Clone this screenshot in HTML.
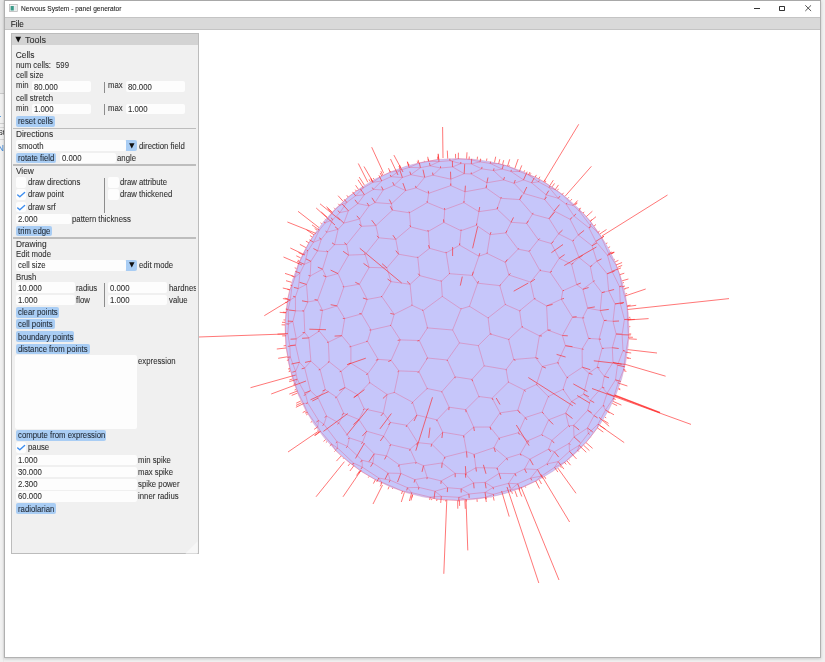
<!DOCTYPE html>
<html><head><meta charset="utf-8">
<style>
html,body{margin:0;padding:0;}
body{width:825px;height:662px;overflow:hidden;position:relative;background:#ebebeb;font-family:"Liberation Sans",sans-serif;}
.t{position:absolute;white-space:nowrap;line-height:1;-webkit-text-stroke:0.08px currentColor;}
.r{position:absolute;}
#win{position:absolute;left:4px;top:0;width:817px;height:658px;background:#fff;box-shadow:0 0 0 0 #999, 1px 1px 3px rgba(0,0,0,0.25);}
</style></head><body>
<div id="root" style="position:absolute;left:0;top:0;width:825px;height:662px;will-change:transform">
<div class="r" style="left:0;top:0;width:825px;height:662px;background:#f1f1f1"></div>
<div class="r" style="left:0;top:0;width:4px;height:93px;background:#e6e6e6"></div>
<div class="r" style="left:0;top:93px;width:4px;height:0.8px;background:#c9c9c9"></div>
<div class="r" style="left:0;top:115.7px;width:1.3px;height:1px;background:#5a9fe0"></div>
<div class="r" style="left:0;top:123.2px;width:4px;height:0.8px;background:#cfcfcf"></div>
<div class="r" style="left:0;top:127px;width:4px;height:0.8px;background:#d6d6d6"></div>
<div class="t" style="left:-2.6px;top:129.2px;font-size:8px;color:#333;width:6.4px;overflow:hidden">St</div>
<div class="r" style="left:0;top:139.4px;width:4px;height:0.8px;background:#d6d6d6"></div>
<div class="t" style="left:-2.2px;top:144.4px;font-size:8.5px;color:#4a8ed8;width:6px;overflow:hidden">N</div>
<div class="r" style="left:2.6px;top:0;width:1.4px;height:662px;background:linear-gradient(90deg,rgba(0,0,0,0),rgba(0,0,0,0.06))"></div>
<div class="r" style="left:4px;top:0;width:817px;height:658px;background:#fff;box-shadow:0 1px 3px rgba(0,0,0,0.18)"></div>
<div class="r" style="left:3.5px;top:0;width:1.2px;height:658px;background:#b0b0b0"></div>
<div class="r" style="left:820.3px;top:0;width:1.2px;height:658px;background:#b0b0b0"></div>
<div class="r" style="left:4px;top:657px;width:817px;height:1.3px;background:#b2b2b2"></div>
<div class="r" style="left:4px;top:0;width:817px;height:1px;background:#a8a8a8"></div>
<!-- title -->
<svg class="r" style="left:9px;top:4px" width="9" height="8" viewBox="0 0 9 8"><rect x="0.5" y="0.5" width="7.8" height="7" fill="#f4f4f4" stroke="#b9b9b9" stroke-width="0.8"/><rect x="1.6" y="2" width="3.2" height="4.5" fill="#3a9a88"/><rect x="5.4" y="2" width="2" height="4.5" fill="#dfe8ea"/></svg>
<div class="t" style="left:20.5px;top:5.2px;font-size:7.8px;color:#1e1e1e;transform-origin:0 0;transform:scaleX(0.845);-webkit-text-stroke:0.1px #1e1e1e">Nervous System - panel generator</div>
<div class="r" style="left:754.2px;top:8.2px;width:6.2px;height:0.9px;background:#333"></div>
<div class="r" style="left:779.1px;top:5.5px;width:4.2px;height:3.9px;border:0.85px solid #333;border-radius:0.8px"></div>
<svg class="r" style="left:804.8px;top:5.2px" width="7" height="7" viewBox="0 0 7 7"><path d="M0.3 0.3L6.1 6.0M6.1 0.3L0.3 6.0" stroke="#333" stroke-width="0.85"/></svg>
<!-- menu -->
<div class="r" style="left:5px;top:17px;width:815px;height:12.5px;background:#d9d9d9;border-top:1px solid #c4c4c4;box-sizing:border-box"></div>
<div class="r" style="left:5px;top:29.3px;width:815px;height:0.9px;background:#c4c4c4"></div>
<div class="t" style="left:10.7px;top:21.2px;font-size:8.2px;color:#222">File</div>
<!-- sphere -->
<svg class="r" style="left:0;top:0" width="825" height="662" viewBox="0 0 825 662">
<ellipse cx="457.1" cy="329.4" rx="171.9" ry="170.9" fill="#c6c6fa" stroke="#d886b0" stroke-opacity="0.45" stroke-width="0.8"/>
<path d="M583.6 394.1L588.9 373.2M612.3 347.7L602.1 348.3M326.9 232.2L321.3 239.2M579.1 445.4L588.3 433.4M353.5 463.0L362.3 467.1M629.0 338.8L628.5 337.1M407.5 487.7L411.7 492.7M519.7 199.6L500.8 198.3M350.9 363.2L350.9 346.6M551.9 440.4L541.8 434.7M480.1 161.9L471.3 163.9M530.5 282.1L534.2 298.8M536.4 384.5L524.3 390.1M572.7 240.9L558.6 233.8M357.8 203.6L364.4 194.7M524.3 390.1L508.4 382.1M304.8 332.6L308.9 337.9M288.2 309.4L290.3 299.9M474.1 454.4L494.0 447.6M500.8 198.3L497.1 209.0M295.6 345.1L289.8 346.2M569.5 451.3L558.2 461.6M458.8 497.3L466.2 499.5M349.4 437.9L362.6 442.3M558.2 461.6L547.0 463.9M410.6 226.9L409.5 212.8M505.8 232.9L490.1 234.6M367.5 341.3L378.2 359.4M499.8 285.6L505.2 304.5M360.5 470.9L375.4 479.7M331.7 444.1L320.6 431.4M616.1 334.0L612.3 347.7M324.0 424.4L337.1 441.7M490.0 427.0L499.0 438.1M287.8 333.5L288.6 324.0M307.9 301.9L303.9 311.0M417.6 442.6L431.7 444.1M418.9 487.4L414.9 479.6M319.3 431.9L320.6 431.4M399.2 464.8L400.8 473.4M437.0 419.9L449.1 407.2M400.8 473.4L388.1 473.1M429.5 248.3L428.3 231.4M428.7 193.3L450.8 185.6M568.7 425.8L565.7 413.2M548.6 449.1L551.9 440.4M557.5 362.7L542.3 366.5M441.9 391.6L455.0 376.8M508.4 382.1L506.1 369.5M449.5 273.7L472.3 275.4M362.3 467.1L362.0 460.2M369.1 205.9L375.0 202.6M325.2 222.9L332.5 212.4M523.7 193.4L514.1 183.3M423.1 310.5L442.3 296.4M465.8 409.6L449.1 407.2M287.8 333.5L289.8 346.2M430.0 165.8L420.4 167.7M317.6 250.8L321.3 239.2M347.4 446.4L349.4 437.9M569.1 443.4L554.4 451.8M622.1 334.7L616.1 334.0M597.4 427.9L598.0 424.2M548.7 419.8L541.8 434.7M367.8 373.8L350.9 363.2M388.1 473.1L372.9 463.0M559.2 258.3L571.6 264.2M519.6 310.8L534.2 298.8M416.1 187.9L405.7 190.6M590.3 266.5L593.3 281.4M531.6 182.8L523.5 179.9M599.0 339.1L602.1 348.3M416.1 462.4L423.5 465.7M337.1 441.7L337.6 448.0M410.1 449.2L417.6 442.6M290.0 368.6L295.2 383.8M578.3 235.0L570.1 219.3M529.2 251.3L518.1 249.2M590.4 221.2L583.1 213.0M295.4 296.8L290.3 299.9M558.3 198.3L566.1 204.1M485.5 497.4L493.4 494.3M460.8 163.6L471.3 163.9M535.7 357.7L539.4 335.8M583.6 394.1L590.3 400.4M475.9 467.7L474.1 454.4M363.4 187.9L372.7 182.4M465.4 473.8L455.2 473.4M322.5 269.2L326.1 276.8M474.1 454.4L466.5 451.6M289.7 289.9L287.8 298.7M442.7 432.2L463.7 435.7M508.6 483.3L493.1 487.4M530.7 478.1L537.5 469.5M608.7 253.6L616.0 265.0M407.5 487.7L390.1 480.2M519.7 199.6L523.7 193.4M348.6 255.1L338.0 273.6M314.0 234.8L308.8 242.8M288.6 360.0L290.0 368.6M430.0 165.8L440.6 168.0M624.1 370.8L623.6 369.5M480.1 161.9L490.2 163.4M366.7 431.2L362.6 442.3M484.2 365.8L472.0 379.4M531.6 182.8L546.1 194.8M386.5 455.8L374.2 453.8M534.2 298.8L546.6 305.9M400.4 170.2L390.4 172.2M353.8 465.8L360.5 470.9M324.0 424.4L318.6 420.5M416.1 462.4L399.2 464.8M359.6 219.0L361.4 226.3M566.9 377.4L582.3 367.2M458.3 158.9L449.9 160.7M562.2 194.5L573.1 205.4M588.3 433.4L587.5 428.0M292.9 321.4L295.5 310.8M417.8 257.6L419.7 275.6M402.5 491.1L381.7 482.1M295.5 310.8L295.4 296.8M327.9 251.8L322.5 269.2M569.5 451.3L569.1 443.4M527.8 440.8L518.4 432.7M613.2 398.4L613.2 401.4M326.6 416.1L324.0 424.4M519.7 199.6L532.4 214.2M513.7 359.5L506.1 369.5M536.4 384.5L542.3 366.5M412.2 305.3L410.1 284.3M332.5 212.4L339.8 205.4M555.2 189.7L544.0 181.7M447.3 360.0L455.0 376.8M478.3 345.6L484.2 365.8M414.9 479.6L400.8 473.4M296.3 338.9L292.9 321.4M341.8 335.7L344.7 318.5M348.2 197.0L356.3 191.0M290.3 356.9L289.8 346.2M500.0 412.9L517.8 410.2M570.1 219.3L573.9 215.9M443.9 222.4L444.7 209.7M317.8 426.8L320.6 431.4M375.4 479.7L381.7 482.1M463.9 202.6L465.0 191.8M473.7 427.1L463.7 435.7M555.2 189.7L562.2 194.5M390.4 422.4L383.3 413.1M572.7 240.9L578.3 235.0M513.7 359.5L535.7 357.7M558.6 233.8L549.1 218.7M594.0 415.6L603.1 405.5M410.8 174.7L424.7 177.3M410.1 449.2L416.1 462.4M341.2 455.9L335.6 450.4M331.7 444.1L337.6 448.0M295.6 371.3L290.3 356.9M613.0 321.3L604.1 320.5M337.1 441.7L347.4 446.4M412.6 402.3L427.2 388.5M429.5 248.3L417.8 257.6M303.6 403.6L307.7 402.9M604.3 376.3L613.0 362.4M288.6 324.0L288.2 309.4M299.5 362.3L304.7 368.0M554.2 211.0L570.1 219.3M547.8 330.1L562.4 335.5M392.4 210.2L391.5 203.8M607.1 273.8L608.7 290.9M579.1 257.6L572.7 240.9M538.4 239.8L526.7 223.4M517.8 410.2L525.2 417.6M313.5 242.2L308.0 250.7M306.5 284.4L298.3 288.5M455.2 473.4L441.2 480.9M375.9 225.6L392.4 210.2M308.9 337.9L319.3 331.1M295.6 345.1L296.3 338.9M387.2 394.5L369.8 382.6M341.2 371.3L329.2 361.8M468.9 494.0L458.8 497.3M322.5 310.4L317.6 300.2M357.8 203.6L369.1 205.9M369.2 267.4L365.2 254.5M532.4 214.2L526.7 223.4M598.0 424.2L588.3 433.4M322.5 269.2L310.2 276.0M409.5 212.8L427.3 202.5M518.1 249.2L505.8 232.9M529.2 251.3L538.4 239.8M417.6 442.6L406.9 425.3M307.5 412.4L317.8 426.8M406.9 425.3L416.9 415.0M417.8 257.6L398.6 254.2M288.6 360.0L290.3 356.9M497.0 468.0L499.1 473.4M390.6 444.6L383.7 436.1M398.6 254.2L395.8 239.4M466.5 451.6L463.7 435.7M308.8 242.8L303.1 254.8M419.3 340.5L400.3 339.9M485.1 482.4L493.1 487.4M508.9 275.0L530.5 282.1M428.7 193.3L427.3 202.5M551.3 243.5L558.6 233.8M550.2 272.3L559.2 258.3M373.4 189.4L381.7 180.9M424.7 177.3L416.1 187.9M410.8 174.7L402.4 177.5M443.9 222.4L428.3 231.4M292.9 321.4L288.6 324.0M383.3 413.1L364.2 408.9M441.2 480.9L427.2 477.5M295.6 371.3L299.5 362.3M601.9 292.6L600.2 310.5M427.2 477.5L423.5 465.7M319.3 331.1L328.4 342.2M299.5 362.3L295.6 345.1M615.5 379.8L617.5 365.2M461.0 230.7L459.6 245.1M317.6 300.2L326.1 276.8M503.6 179.9L493.5 170.6M369.2 267.4L386.9 267.9M622.1 286.8L619.5 286.6M449.5 273.7L446.2 252.9M364.4 194.7L373.4 189.4M518.4 432.7L525.2 417.6M478.3 345.6L490.1 333.9M427.5 327.9L452.6 330.0M465.4 473.8L475.9 467.7M569.1 443.4L574.0 436.9M623.0 350.6L617.5 365.2M292.1 285.6L290.3 299.9M378.8 478.0L362.3 467.1M507.6 166.1L519.5 171.5M298.8 263.7L303.1 254.8M468.9 494.0L485.0 492.4M394.3 392.4L398.9 370.9M427.6 358.0L418.9 371.6M492.1 398.2L500.0 412.9M601.5 237.8L608.7 253.6M620.3 303.6L615.0 303.9M419.7 275.6L441.3 281.3M440.6 168.0L433.0 175.2M390.9 325.4L371.0 330.0M571.6 264.2L576.7 284.6M326.9 232.2L332.8 219.5M521.9 326.9L519.6 310.8M460.8 163.6L452.5 166.9M303.6 403.6L307.5 412.4M430.2 497.1L436.9 499.3M561.3 299.2L572.5 317.2M628.5 337.1L627.5 319.8M519.1 488.5L535.7 481.0M465.8 409.6L473.7 427.1M622.1 334.7L623.0 350.6M442.2 462.9L444.8 457.1M517.7 483.8L510.3 489.8M285.2 322.4L286.1 312.5M304.8 332.6L296.3 338.9M605.5 410.1L613.2 398.4M371.0 330.0L367.5 341.3M523.7 193.4L544.7 199.5M308.9 337.9L310.9 361.1M493.5 170.6L502.2 169.1M391.1 360.3L400.3 339.9M601.5 237.8L597.8 232.5M519.5 171.5L510.9 171.4M469.5 306.3L488.1 317.9M593.3 281.4L601.9 292.6M508.9 275.0L505.3 262.3M433.0 175.2L450.8 179.2M383.2 190.0L373.4 189.4M612.3 347.7L613.0 362.4M338.9 423.0L349.4 437.9M419.3 340.5L427.6 358.0M620.3 303.6L624.4 319.5M329.2 361.8L328.4 342.2M409.1 167.4L420.4 167.7M588.9 373.2L597.2 367.2M542.1 412.1L525.2 417.6M387.2 394.5L394.3 392.4M355.6 195.8L346.8 202.4M551.3 243.5L538.4 239.8M338.0 273.6L343.9 286.9M554.2 211.0L549.1 218.7M359.6 219.0L343.9 223.1M319.3 230.1L325.2 222.9M341.8 335.7L328.4 342.2M493.4 494.3L485.0 492.4M289.7 289.9L292.1 285.6M338.0 273.6L326.1 276.8M515.1 473.6L524.6 468.9M546.6 305.9L547.8 330.1M447.3 360.0L427.6 358.0M297.2 379.2L305.6 394.6M526.7 223.4L511.1 222.3M305.6 394.6L307.7 402.9M394.2 314.3L412.2 305.3M573.1 205.4L566.1 204.1M399.2 464.8L386.5 455.8M566.1 204.1L573.9 215.9M506.7 458.2L520.3 453.9M460.8 163.6L449.9 160.7M519.1 488.5L510.3 489.8M497.1 209.0L478.9 211.7M582.3 367.2L582.1 349.0M348.6 255.1L346.7 244.5M307.9 301.9L306.5 284.4M582.1 349.0L588.6 338.4M440.6 168.0L452.5 166.9M472.0 379.4L455.0 376.8M427.5 327.9L419.3 340.5M549.1 218.7L532.4 214.2M539.9 270.5L530.5 282.1M295.2 383.8L297.4 391.0M624.4 319.5L627.5 319.8M518.4 432.7L499.0 438.1M590.3 266.5L596.9 261.2M395.8 239.4L410.6 226.9M616.1 334.0L613.0 321.3M557.5 362.7L565.4 345.7M386.5 455.8L390.6 444.6M298.3 288.5L295.4 296.8M358.9 419.5L364.2 408.9M510.9 171.4L502.2 169.1M488.1 317.9L505.2 304.5M518.1 249.2L505.3 262.3M490.2 163.4L502.2 169.1M473.6 482.9L485.1 482.4M441.3 281.3L449.5 273.7M477.6 283.2L472.3 275.4M418.9 487.4L435.0 491.2M345.0 387.5L336.5 397.2M361.5 313.9L367.2 299.4M478.9 256.2L487.0 253.4M593.3 281.4L582.9 289.3M367.2 299.4L359.4 284.2M329.2 361.8L320.1 369.5M390.4 172.2L381.7 176.1M514.1 183.3L523.5 179.9M391.1 281.6L410.1 284.3M477.6 283.2L499.8 285.6M554.2 211.0L544.7 199.5M538.5 181.8L528.6 175.0M343.9 223.1L338.1 229.3M623.6 369.5L618.2 383.0M441.9 391.6L449.1 407.2M599.0 339.1L604.1 320.5M627.2 306.5L627.5 319.8M343.7 413.3L336.5 397.2M411.7 492.7L402.5 491.1M548.3 396.5L563.0 389.3M542.1 412.1L548.7 419.8M355.6 195.8L364.4 194.7M367.5 341.3L350.9 346.6M308.0 250.7L303.1 254.8M478.9 211.7L476.4 225.3M511.1 222.3L497.1 209.0M410.1 284.3L419.7 275.6M361.5 313.9L344.7 318.5M405.7 190.6L394.1 185.3M486.1 187.9L486.9 182.8M528.6 175.0L535.3 177.0M428.7 193.3L416.1 187.9M481.7 168.8L493.5 170.6M348.4 210.8L339.9 212.6M381.7 180.9L391.0 176.7M310.9 361.1L320.1 369.5M528.6 175.0L519.5 171.5M416.9 415.0L412.6 402.3M461.0 230.7L476.4 225.3M562.4 335.5L572.5 317.2M346.8 202.4L339.9 212.6M427.2 388.5L418.9 371.6M558.3 198.3L546.1 194.8M523.5 179.9L510.9 171.4M596.9 261.2L592.0 245.8M375.0 202.6L391.5 203.8M338.1 229.3L334.6 244.6M444.7 209.7L427.3 202.5M443.9 222.4L461.0 230.7M395.8 239.4L378.7 237.8M369.8 382.6L357.8 394.8M410.1 449.2L390.6 444.6M590.0 225.2L578.8 210.4M435.0 491.2L447.6 487.7M465.4 473.8L473.6 482.9M446.2 252.9L459.6 245.1M461.1 488.8L447.6 487.7M325.3 389.7L318.2 398.1M469.1 159.3L480.1 161.9M286.1 312.5L288.2 309.4M544.0 181.7L535.3 177.0M513.7 359.5L508.6 339.4M400.4 170.2L391.0 176.7M565.4 345.7L562.4 335.5M524.6 468.9L529.9 459.2M542.3 366.5L535.7 357.7M503.6 179.9L486.9 182.8M318.6 420.5L307.7 402.9M557.5 362.7L566.9 377.4M346.8 202.4L339.8 205.4M459.4 342.9L447.3 360.0M326.9 232.2L338.1 229.3M409.1 167.4L418.9 163.2M305.6 394.6L310.4 390.7M473.6 482.9L461.1 488.8M308.0 250.7L304.3 264.3M430.2 497.1L441.3 496.3M457.7 500.5L436.9 499.3M366.7 431.2L383.7 436.1M535.7 481.0L541.4 476.1M514.1 183.3L503.6 179.9M589.0 228.0L590.0 225.2M287.8 333.5L285.6 335.8M565.4 345.7L582.1 349.0M353.8 465.8L353.5 463.0M378.2 359.4L391.1 360.3M579.1 257.6L571.6 264.2M595.8 241.4L607.5 255.3M579.1 257.6L590.3 266.5M500.8 198.3L486.1 187.9M537.5 469.5L524.6 468.9M472.3 275.4L478.9 256.2M547.0 463.9L554.4 451.8M455.2 473.4L442.2 462.9M369.8 382.6L367.8 373.8M586.0 442.6L597.4 427.9M530.7 478.1L517.7 483.8M511.1 222.3L505.8 232.9M412.6 402.3L394.3 392.4M520.3 453.9L527.8 440.8M469.5 306.3L477.6 283.2M554.4 451.8L548.6 449.1M348.4 210.8L357.8 203.6M471.3 163.9L481.7 168.8M588.9 373.2L582.3 367.2M478.9 256.2L459.6 245.1M539.4 335.8L521.9 326.9M464.2 173.7L450.8 179.2M338.9 423.0L343.7 413.3M505.3 262.3L487.0 253.4M548.3 396.5L542.1 412.1M423.5 465.7L442.2 462.9M357.8 394.8L345.0 387.5M386.9 267.9L391.1 281.6M627.5 305.6L627.2 306.5M332.8 219.5L339.9 212.6M472.0 379.4L478.9 396.5M578.3 235.0L592.0 245.8M317.6 250.8L310.9 261.3M500.0 412.9L490.0 427.0M625.8 352.2L623.0 350.6M452.5 166.9L464.2 173.7M394.1 185.3L383.2 190.0M530.7 478.1L541.4 476.1M568.7 425.8L573.6 425.4M587.6 308.1L600.2 310.5M573.6 425.4L587.7 410.3M490.2 163.4L498.7 163.7M471.2 174.0L464.2 173.7M612.0 271.3L619.5 286.6M369.2 267.4L359.4 284.2M587.5 428.0L574.0 436.9M524.3 390.1L517.8 410.2M444.8 457.1L466.5 451.6M549.1 187.5L555.2 189.7M414.9 479.6L427.2 477.5M499.1 473.4L485.1 482.4M619.7 274.7L622.1 286.8M597.2 367.2L602.1 348.3M431.7 444.1L444.8 457.1M358.9 419.5L343.7 413.3M338.9 423.0L326.6 416.1M476.4 225.3L490.1 234.6M497.0 468.0L506.7 458.2M423.1 310.5L412.2 305.3M390.1 480.2L388.1 473.1M428.6 161.3L437.8 159.4M390.9 325.4L400.3 339.9M539.9 270.5L550.2 272.3M341.2 371.3L350.9 363.2M576.7 284.6L582.9 289.3M628.5 337.1L625.8 352.2M310.2 276.0L306.5 284.4M410.6 226.9L428.3 231.4M295.6 371.3L297.2 379.2M304.7 368.0L310.9 361.1M341.8 335.7L350.9 346.6M627.2 306.5L622.1 286.8M450.8 185.6L450.8 179.2M620.3 303.6L619.5 286.6M348.6 255.1L365.2 254.5M359.4 284.2L343.9 286.9M391.1 360.3L398.9 370.9M318.6 420.5L317.8 426.8M603.1 405.5L607.1 393.2M325.2 222.9L332.8 219.5M497.0 468.0L475.9 467.7M623.6 369.5L625.8 352.2M554.6 467.4L564.5 462.3M398.9 370.9L418.9 371.6M304.8 332.6L303.9 311.0M597.8 232.5L590.0 225.2M469.1 159.3L458.3 158.9M564.5 462.3L577.6 450.3M424.7 177.3L433.0 175.2M468.9 494.0L461.1 488.8M463.9 202.6L478.9 211.7M478.9 396.5L465.8 409.6M463.9 202.6L444.7 209.7M579.1 445.4L569.5 451.3M494.0 447.6L499.0 438.1M515.1 473.6L508.6 483.3M341.2 371.3L345.0 387.5M372.7 182.4L381.7 180.9M383.3 413.1L387.2 394.5M486.1 187.9L465.0 191.8M303.9 311.0L295.5 310.8M486.9 182.8L471.2 174.0M310.9 261.3L304.3 264.3M618.2 383.0L615.5 379.8M357.8 394.8L364.2 408.9M508.6 339.4L490.1 333.9M583.6 394.1L571.5 401.5M343.9 286.9L337.1 305.9M461.0 309.0L469.5 306.3M288.6 360.0L285.9 345.6M378.7 237.8L375.9 225.6M484.2 365.8L506.1 369.5M589.0 228.0L595.8 241.4M355.6 195.8L363.4 187.9M398.6 254.2L386.9 267.9M331.7 444.1L335.6 450.4M375.0 202.6L383.2 190.0M550.2 272.3L562.8 290.8M300.0 273.1L295.0 277.1M578.8 210.4L583.1 213.0M577.6 450.3L579.1 445.4M295.0 277.1L292.1 285.6M537.5 469.5L547.0 463.9M508.6 483.3L517.7 483.8M565.7 413.2L571.5 401.5M298.8 263.7L295.0 277.1M310.4 390.7L304.7 368.0M588.6 338.4L582.6 317.9M466.2 499.5L457.7 500.5M465.0 191.8L450.8 185.6M478.3 345.6L459.4 342.9M372.7 182.4L381.7 176.1M546.6 305.9L561.3 299.2M600.2 310.5L604.1 320.5M558.3 198.3L549.1 187.5M572.5 317.2L582.6 317.9M286.1 312.5L287.8 298.7M617.5 365.2L613.0 362.4M549.1 187.5L538.5 181.8M297.2 379.2L295.2 383.8M441.2 480.9L447.6 487.7M319.3 230.1L314.0 234.8M566.9 377.4L563.0 389.3M559.2 258.3L551.3 243.5M499.8 285.6L508.9 275.0M588.6 338.4L599.0 339.1M431.7 444.1L442.7 432.2M573.1 205.4L578.8 210.4M371.0 330.0L361.5 313.9M322.5 310.4L337.1 305.9M607.5 255.3L612.0 271.3M590.3 400.4L602.2 387.1M427.5 327.9L423.1 310.5M391.5 203.8L405.7 190.6M390.9 325.4L394.2 314.3M506.7 458.2L494.0 447.6M608.7 290.9L615.0 303.9M536.4 384.5L548.3 396.5M607.1 393.2L602.2 387.1M304.3 264.3L300.0 273.1M336.5 397.2L325.3 389.7M510.3 489.8L493.4 494.3M378.8 478.0L390.1 480.2M353.5 463.0L337.6 448.0M473.7 427.1L490.0 427.0M544.7 199.5L546.1 194.8M568.7 425.8L551.9 440.4M487.0 253.4L490.1 234.6M418.9 163.2L428.6 161.3M442.3 296.4L461.0 309.0M361.4 226.3L346.7 244.5M381.9 296.7L367.2 299.4M562.8 290.8L561.3 299.2M622.1 334.7L624.4 319.5M285.2 322.4L285.6 335.8M411.7 492.7L430.2 497.1M597.8 232.5L590.4 221.2M485.5 497.4L466.2 499.5M372.9 463.0L374.2 453.8M619.7 274.7L616.0 265.0M375.9 225.6L361.4 226.3M321.3 239.2L313.5 242.2M586.0 442.6L577.6 450.3M378.8 478.0L381.7 482.1M344.7 318.5L337.1 305.9M367.8 373.8L378.2 359.4M390.4 422.4L383.7 436.1M538.5 181.8L531.6 182.8M505.2 304.5L519.6 310.8M592.0 245.8L595.8 241.4M334.6 244.6L346.7 244.5M394.1 185.3L402.4 177.5M327.9 251.8L334.6 244.6M582.9 289.3L587.6 308.1M285.9 345.6L285.6 335.8M310.4 390.7L318.2 398.1M416.9 415.0L437.0 419.9M605.5 410.1L603.1 405.5M529.9 459.2L520.3 453.9M452.6 330.0L459.4 342.9M429.5 248.3L446.2 252.9M409.5 212.8L392.4 210.2M596.9 261.2L607.1 273.8M574.0 436.9L573.6 425.4M322.5 310.4L319.3 331.1M587.6 308.1L582.6 317.9M608.7 253.6L607.5 255.3M441.3 496.3L458.8 497.3M481.7 168.8L471.2 174.0M541.4 476.1L554.6 467.4M430.0 165.8L439.0 161.6M366.7 431.2L358.9 419.5M597.2 367.2L604.3 376.3M362.0 460.2L372.9 463.0M325.3 389.7L320.1 369.5M406.9 425.3L390.4 422.4M492.1 398.2L508.4 382.1M428.6 161.3L439.0 161.6M452.6 330.0L461.0 309.0M402.4 177.5L391.0 176.7M607.1 273.8L612.0 271.3M608.7 290.9L601.9 292.6M369.1 205.9L359.6 219.0M394.2 314.3L381.9 296.7M576.7 284.6L562.8 290.8M310.2 276.0L310.9 261.3M598.0 424.2L605.5 410.1M607.1 393.2L615.5 379.8M437.0 419.9L442.7 432.2M303.6 403.6L297.4 391.0M515.1 473.6L499.1 473.4M565.7 413.2L548.7 419.8M435.0 491.2L441.3 496.3M554.6 467.4L558.2 461.6M418.9 487.4L407.5 487.7M441.9 391.6L427.2 388.5M541.8 434.7L527.8 440.8M307.9 301.9L317.6 300.2M521.9 326.9L508.6 339.4M381.9 296.7L391.1 281.6M442.3 296.4L441.3 281.3M319.3 230.1L313.5 242.2M326.6 416.1L318.2 398.1M439.0 161.6L449.9 160.7M348.4 210.8L343.9 223.1M365.2 254.5L378.7 237.8M409.1 167.4L400.4 170.2M539.4 335.8L547.8 330.1M327.9 251.8L317.6 250.8M339.8 205.4L348.2 197.0M298.3 288.5L300.0 273.1M363.4 187.9L356.3 191.0M420.4 167.7L410.8 174.7M362.6 442.3L374.2 453.8M587.5 428.0L594.0 415.6M590.3 400.4L587.7 410.3M613.2 398.4L618.2 383.0M539.9 270.5L529.2 251.3M587.7 410.3L594.0 415.6M548.6 449.1L529.9 459.2M478.9 396.5L492.1 398.2M615.0 303.9L613.0 321.3M353.8 465.8L341.2 455.9M602.2 387.1L604.3 376.3M493.1 487.4L485.0 492.4M589.0 228.0L573.9 215.9M347.4 446.4L362.0 460.2M498.7 163.7L507.6 166.1M571.5 401.5L563.0 389.3M490.1 333.9L488.1 317.9" stroke="#e8507c" stroke-opacity="0.45" stroke-width="0.8" fill="none"/>
<path d="M427.5 327.9L426.8 327.8M296.0 389.5L294.6 390.0M301.6 402.8L296.0 405.4M418.9 487.4L418.4 489.5M414.9 479.6L414.1 482.5M410.1 449.2L409.5 450.7M416.1 462.4L415.7 463.7M417.6 442.6L416.7 445.2M406.9 425.3L406.1 427.0M416.9 415.0L414.0 421.0M629.2 333.9L631.2 334.0M603.1 420.0L608.5 423.4M604.9 417.1L606.2 417.9M289.7 289.6L282.8 288.0M291.6 282.3L286.0 280.7M300.7 257.9L296.3 255.8M293.5 276.2L285.0 273.4M296.3 268.4L294.7 267.8M554.2 211.0L559.5 204.6M558.3 198.3L560.0 196.1M549.1 187.5L550.1 186.0M538.5 181.8L539.3 180.4M327.9 251.8L326.5 250.9M317.6 250.8L313.4 248.5M326.9 232.2L325.6 231.2M321.3 239.2L319.2 237.8M390.9 325.4L390.1 325.4M394.2 314.3L390.3 313.4M409.1 167.4L407.4 161.7M429.5 248.3L428.5 245.2M417.8 257.6L417.4 256.8M398.6 254.2L395.8 250.6M395.8 239.4L392.9 235.2M430.0 165.8L429.5 162.9M420.4 167.7L419.4 163.0M519.7 199.6L521.7 195.4M410.6 226.9L409.9 225.3M443.9 222.4L443.5 219.4M428.3 231.4L427.8 230.0M544.6 476.7L545.8 478.8M560.3 466.3L561.3 467.7M445.7 500.1L445.6 501.4M322.5 269.2L317.8 267.1M295.6 371.3L292.3 372.2M299.5 362.3L291.4 364.0M295.6 345.1L290.1 345.6M304.8 332.6L302.6 332.6M296.3 338.9L290.5 339.2M287.2 356.8L278.2 358.3M515.1 473.6L516.1 476.2M586.0 442.6L592.6 448.4M597.4 427.9L603.3 432.1M590.8 437.2L590.9 437.3M583.7 445.3L589.4 450.6M568.9 459.5L569.5 460.1M338.9 423.0L337.4 424.2M407.5 487.7L406.7 490.4M411.7 492.7L409.4 501.0M378.8 478.0L376.7 482.0M390.1 480.2L389.1 482.4M390.4 422.4L388.5 425.0M289.9 370.1L289.2 370.3M601.5 237.8L604.0 236.3M618.4 389.1L620.2 389.8M626.8 357.8L628.8 358.2M372.2 180.6L370.8 178.2M305.9 247.6L299.9 244.4M321.7 223.7L320.5 222.8M319.3 230.1L312.0 224.9M314.0 234.8L306.6 229.9M308.8 242.8L305.9 241.1M313.5 242.2L309.4 239.8M500.8 198.3L501.3 197.0M531.6 182.8L534.2 177.9M523.7 193.4L526.8 187.0M544.7 199.5L546.5 196.9M546.1 194.8L548.8 190.6M455.6 158.3L455.5 153.9M555.2 189.7L558.5 184.9M528.6 175.0L530.0 172.0M383.3 413.1L380.9 415.9M371.0 330.0L369.6 330.0M341.8 335.7L334.6 336.1M387.2 394.5L382.9 398.5M369.8 382.6L368.9 383.2M381.9 296.7L381.0 296.3M369.2 267.4L363.5 263.4M386.9 267.9L382.1 263.7M391.1 281.6L387.6 279.0M423.1 310.5L422.2 310.0M412.2 305.3L411.5 305.0M410.1 284.3L407.0 281.3M419.7 275.6L418.3 273.7M478.3 345.6L478.6 345.8M452.6 330.0L452.5 330.0M459.4 342.9L459.4 343.1M442.3 296.4L442.1 296.1M441.3 281.3L441.0 280.5M461.0 309.0L461.1 308.5M469.5 306.3L469.7 306.1M539.9 270.5L541.0 269.8M484.2 365.8L484.5 366.2M472.0 379.4L472.5 381.2M478.9 396.5L479.1 397.2M492.1 398.2L493.0 399.9M536.4 384.5L537.4 385.2M524.3 390.1L525.7 391.4M508.4 382.1L509.0 382.6M513.7 359.5L515.4 360.4M506.1 369.5L506.7 370.0M626.8 357.8L630.9 358.5M579.1 257.6L582.7 255.4M572.7 240.9L574.0 240.0M550.2 272.3L551.9 271.3M559.2 258.3L564.6 254.6M571.6 264.2L573.3 263.3M355.6 195.8L352.6 191.9M348.4 210.8L342.2 204.0M325.2 222.9L323.8 221.8M346.8 202.4L344.1 199.2M332.8 219.5L330.8 217.7M339.9 212.6L337.7 210.5M327.2 217.2L321.3 212.0M332.5 212.4L326.5 206.7M339.8 205.4L338.3 203.8M363.4 187.9L358.0 179.8M418.9 163.2L418.1 159.9M348.6 255.1L343.1 251.3M365.2 254.5L364.2 253.7M378.7 237.8L377.0 235.8M375.9 225.6L371.7 220.2M353.8 465.8L349.9 471.0M360.5 470.9L358.7 473.6M359.9 470.6L356.5 475.5M412.6 494.7L411.9 497.6M305.8 410.9L302.7 412.6M319.2 431.8L318.5 432.3M306.6 412.3L305.0 413.2M350.1 463.4L348.1 465.9M412.5 494.7L411.0 500.5M392.7 488.0L392.4 488.9M369.0 476.4L368.3 477.6M285.2 320.0L283.5 319.9M300.8 401.0L296.2 403.2M288.6 360.0L286.9 360.3M287.8 333.5L285.1 333.6M290.3 356.9L287.4 357.4M289.8 346.2L287.8 346.4M285.8 312.9L279.7 312.3M287.1 302.6L285.2 302.3M307.9 301.9L302.0 300.8M303.9 311.0L302.4 310.8M578.3 235.0L584.1 230.4M570.1 219.3L571.8 217.7M562.2 194.5L563.5 192.8M594.1 225.9L596.0 224.5M497.0 468.0L497.5 469.7M499.1 473.4L500.8 479.1M465.4 473.8L465.7 477.7M475.9 467.7L476.4 471.5M473.6 482.9L474.1 488.3M485.1 482.4L486.1 488.3M511.7 491.7L512.4 493.8M530.7 478.1L531.8 480.4M519.1 488.5L519.8 490.3M535.7 481.0L539.5 488.5M541.4 476.1L542.8 478.5M554.6 467.4L557.9 472.1M564.5 462.3L566.2 464.4M577.6 450.3L578.8 451.5M579.1 445.4L586.3 452.3M537.5 469.5L541.3 476.2M524.6 468.9L526.5 472.9M341.2 371.3L339.7 371.8M326.6 416.1L324.7 417.4M404.4 492.3L401.3 502.0M402.5 491.1L401.5 494.0M389.1 486.6L388.0 489.3M381.8 483.2L380.2 486.3M375.4 479.7L373.4 483.6M381.7 482.1L380.9 483.8M353.5 463.0L352.2 464.7M362.3 467.1L360.8 469.2M399.2 464.8L398.3 466.7M400.8 473.4L397.5 482.0M388.1 473.1L385.1 479.2M366.7 431.2L362.3 436.1M386.5 455.8L384.5 459.4M390.6 444.6L389.8 446.0M383.7 436.1L380.3 441.0M624.4 289.3L625.4 289.0M580.2 449.0L580.2 449.0M308.0 250.7L306.6 250.0M298.8 263.7L297.4 263.1M303.1 254.8L298.5 252.6M325.3 219.4L324.8 219.0M312.2 237.0L309.9 235.5M317.0 230.1L314.7 228.5M463.9 202.6L464.0 201.1M444.7 209.7L444.5 208.0M469.1 159.3L469.3 156.5M480.1 161.9L480.5 158.7M460.8 163.6L460.8 162.0M471.3 163.9L471.7 158.8M481.7 168.8L482.0 166.9M490.2 163.4L490.6 161.6M498.7 163.7L499.8 159.2M507.6 166.1L509.7 159.3M519.5 171.5L520.0 170.0M367.5 341.3L366.2 341.4M367.8 373.8L366.2 374.6M378.2 359.4L375.9 360.3M350.9 363.2L348.5 364.0M350.9 346.6L349.5 346.8M322.5 310.4L319.8 310.0M317.6 300.2L314.6 299.5M338.0 273.6L330.6 270.1M326.1 276.8L323.3 275.6M391.1 360.3L388.3 361.6M419.3 340.5L417.4 341.0M400.3 339.9L397.7 340.4M412.6 402.3L411.7 403.7M394.3 392.4L393.6 393.1M398.9 370.9L397.6 371.8M361.5 313.9L359.4 313.5M367.2 299.4L362.9 298.0M359.4 284.2L355.3 282.3M343.9 286.9L342.8 286.5M344.7 318.5L342.8 318.4M337.1 305.9L330.7 304.7M529.2 251.3L530.2 250.3M477.6 283.2L478.6 281.1M568.7 425.8L569.9 426.9M557.5 362.7L559.0 363.2M542.3 366.5L545.8 368.0M535.7 357.7L538.3 358.7M539.4 335.8L541.9 336.0M521.9 326.9L523.0 326.8M508.6 339.4L509.3 339.5M490.1 333.9L491.5 334.1M488.1 317.9L488.6 317.7M499.8 285.6L500.8 284.7M508.9 275.0L510.4 273.4M505.2 304.5L505.7 304.3M519.6 310.8L520.5 310.6M530.5 282.1L535.0 279.2M534.2 298.8L535.4 298.4M598.0 424.2L605.5 429.2M588.3 433.4L589.6 434.4M546.6 305.9L552.6 304.4M547.8 330.1L550.6 330.1M590.3 266.5L592.2 265.6M608.7 253.6L611.9 252.0M335.0 208.8L334.0 207.8M331.6 212.3L327.6 208.5M372.7 182.4L370.9 179.3M400.4 170.2L399.0 166.0M390.4 172.2L389.7 170.6M381.7 176.1L380.1 172.9M428.6 161.3L428.2 158.8M458.3 158.9L458.4 152.7M447.7 158.6L447.3 150.6M437.8 159.4L437.5 156.6M439.0 161.6L438.2 153.7M449.9 160.7L449.8 158.7M390.0 171.8L388.5 168.2M408.5 165.3L407.4 161.8M400.6 167.8L399.6 165.0M410.8 174.7L409.8 171.6M424.7 177.3L423.0 169.7M357.8 203.6L354.9 199.8M364.4 194.7L360.3 188.8M369.1 205.9L367.0 202.9M375.0 202.6L371.9 197.8M409.5 212.8L409.0 211.6M392.4 210.2L390.3 206.3M391.5 203.8L389.3 199.5M428.7 193.3L428.2 190.8M427.3 202.5L427.0 201.2M416.1 187.9L415.5 185.9M405.7 190.6L402.9 183.1M359.6 219.0L356.8 215.8M361.4 226.3L359.3 224.0M343.9 223.1L337.4 217.0M338.1 229.3L335.0 226.7M334.6 244.6L332.0 242.8M346.7 244.5L344.3 242.7M567.1 461.0L570.6 465.2M312.8 422.6L312.7 422.6M317.9 430.0L317.3 430.4M324.0 424.4L322.5 425.5M318.6 420.5L316.4 422.0M337.1 441.7L335.8 442.9M331.7 444.1L329.8 445.9M337.6 448.0L336.1 449.5M303.6 403.6L295.9 407.3M297.2 379.2L289.2 381.7M305.6 394.6L303.8 395.4M307.7 402.9L306.3 403.6M297.4 393.1L291.7 395.4M290.2 371.3L288.6 371.7M292.4 379.0L289.4 379.9M290.0 368.6L288.1 369.0M295.2 383.8L293.5 384.3M297.4 391.0L289.3 394.1M286.0 348.0L276.8 349.0M285.2 322.4L282.0 322.3M285.0 333.9L277.5 334.1M285.0 324.9L281.6 324.8M285.9 345.6L283.6 345.8M285.6 335.8L282.2 335.9M310.2 276.0L308.5 275.4M306.5 284.4L299.5 282.3M310.9 261.3L305.9 258.9M304.3 264.3L297.1 261.2M286.1 312.5L282.9 312.2M289.7 289.9L287.4 289.4M287.8 298.7L284.6 298.2M298.3 288.5L293.9 287.4M300.0 273.1L295.3 271.4M295.0 277.1L291.5 275.9M292.1 285.6L290.4 285.1M292.9 321.4L287.7 321.1M295.5 310.8L288.9 310.0M295.4 296.8L293.1 296.3M288.6 324.0L286.3 323.9M288.2 309.4L285.7 309.1M290.3 299.9L282.9 298.6M589.0 228.0L591.1 226.4M573.1 205.4L577.7 200.5M566.1 204.1L567.2 202.8M573.9 215.9L576.1 213.8M455.2 473.4L455.2 477.2M441.2 480.9L440.9 483.8M427.2 477.5L426.9 479.1M423.5 465.7L422.0 471.9M442.2 462.9L441.7 467.8M431.7 444.1L431.1 446.7M444.8 457.1L444.7 458.7M468.9 494.0L469.2 497.9M435.0 491.2L434.0 498.8M461.1 488.8L461.2 492.5M447.6 487.7L447.3 492.1M518.9 489.1L521.8 496.5M539.2 479.7L541.5 484.0M430.2 497.1L429.7 500.0M441.3 496.3L440.7 502.9M458.8 497.3L458.9 501.5M485.5 497.4L486.3 502.0M493.3 496.7L494.1 500.6M466.2 499.5L466.3 501.5M508.6 483.3L510.4 488.4M517.7 483.8L519.6 488.6M510.3 489.8L510.9 491.7M493.4 494.3L493.7 496.0M493.1 487.4L493.5 489.2M485.0 492.4L486.2 499.1M569.5 451.3L576.5 458.9M558.2 461.6L563.9 469.1M547.0 463.9L547.9 465.2M569.1 443.4L570.2 444.6M554.4 451.8L558.7 457.1M329.2 361.8L327.9 362.2M308.9 337.9L302.1 338.3M319.3 331.1L317.9 331.1M328.4 342.2L327.0 342.3M357.8 394.8L353.6 397.6M345.0 387.5L339.3 390.5M358.9 419.5L353.4 424.6M364.2 408.9L363.2 409.8M343.7 413.3L341.8 414.8M336.5 397.2L335.2 397.9M325.3 389.7L322.5 391.0M310.4 390.7L304.5 393.2M318.2 398.1L312.3 401.0M304.7 368.0L301.7 368.8M310.9 361.1L305.0 362.4M320.1 369.5L318.7 369.9M347.4 446.4L346.2 447.8M349.4 437.9L348.2 439.1M362.0 460.2L360.6 462.2M372.9 463.0L370.6 466.7M362.6 442.3L361.4 443.8M374.2 453.8L369.0 461.6M299.4 260.8L297.9 260.1M440.6 168.0L440.5 166.3M452.5 166.9L452.4 161.0M433.0 175.2L432.6 172.6M514.1 183.3L515.3 180.0M503.6 179.9L504.5 177.1M523.5 179.9L527.2 171.7M493.5 170.6L494.0 168.4M510.9 171.4L511.4 169.9M502.2 169.1L503.4 164.9M486.1 187.9L486.6 185.4M486.9 182.8L488.0 177.5M465.0 191.8L465.4 185.7M471.2 174.0L471.3 172.5M464.2 173.7L464.7 164.1M450.8 185.6L450.7 183.5M450.8 179.2L450.5 171.7M477.2 159.5L477.5 156.7M486.5 160.8L486.9 158.5M466.6 158.6L467.0 152.3M494.5 162.4L495.7 156.7M480.8 159.9L480.8 159.4M514.9 168.3L518.2 159.0M509.0 166.3L509.3 165.2M502.6 164.4L503.7 160.2M441.9 391.6L441.7 392.3M427.2 388.5L426.9 389.2M447.3 360.0L447.1 360.9M455.0 376.8L455.0 378.2M427.6 358.0L426.2 359.3M418.9 371.6L417.8 372.8M551.3 243.5L553.5 241.5M538.4 239.8L539.7 238.5M558.6 233.8L562.5 230.1M549.1 218.7L554.8 211.9M532.4 214.2L533.2 212.9M526.7 223.4L528.4 220.7M449.5 273.7L449.4 273.0M472.3 275.4L473.3 271.7M446.2 252.9L446.0 251.9M518.1 249.2L518.8 248.3M505.3 262.3L507.3 259.5M506.7 458.2L507.5 460.2M565.7 413.2L572.5 418.5M548.3 396.5L549.2 397.2M587.5 428.0L592.9 432.1M574.0 436.9L580.4 442.7M573.6 425.4L579.2 430.0M605.5 410.1L614.0 414.8M596.9 261.2L601.5 258.9M592.0 245.8L597.0 242.8M595.8 241.4L603.9 236.3M607.5 255.3L614.0 252.1M607.1 273.8L614.6 271.1M612.0 271.3L621.0 267.9M627.5 305.6L630.6 305.2M629.0 338.8L636.8 339.3M629.2 326.7L630.3 326.6M628.8 317.4L630.3 317.3M343.1 201.3L338.1 195.7M348.2 197.0L346.8 195.3M356.3 191.0L355.3 189.7M353.3 193.0L353.1 192.8M552.2 186.8L554.5 183.4M424.5 161.4L424.3 160.8M409.1 165.1L408.8 164.1M438.7 159.3L438.1 154.3M428.4 160.7L427.7 156.8M417.7 162.9L417.3 161.4M394.1 185.3L392.7 182.2M383.2 190.0L381.4 186.5M402.4 177.5L400.1 170.9M373.4 189.4L372.3 187.6M381.7 180.9L378.9 175.3M391.0 176.7L390.2 174.9M544.6 476.7L544.9 477.2M319.3 431.9L314.4 435.6M307.5 412.4L306.1 413.2M307.6 414.2L306.2 414.9M312.0 421.5L310.7 422.3M317.8 426.8L314.1 429.4M320.6 431.4L315.1 435.5M325.6 439.7L323.5 441.4M343.7 458.1L343.2 458.7M332.9 447.8L332.9 447.8M327.1 441.5L325.9 442.5M341.2 455.9L336.4 461.1M335.6 450.4L334.4 451.6M597.8 232.5L599.7 231.1M590.0 225.2L591.4 224.1M578.8 210.4L580.9 208.4M590.4 221.2L596.0 216.7M583.1 213.0L584.3 211.8M437.0 419.9L436.7 421.1M442.7 432.2L441.9 438.0M465.8 409.6L466.1 412.2M449.1 407.2L448.8 410.1M474.1 454.4L474.5 457.7M466.5 451.6L467.0 457.6M494.0 447.6L495.4 452.0M473.7 427.1L474.4 431.0M463.7 435.7L463.8 437.5M514.9 490.6L517.2 497.0M525.3 486.5L525.7 487.6M457.7 500.5L457.8 508.7M443.8 500.0L443.8 500.3M431.8 498.6L431.6 500.1M436.9 499.3L436.7 501.0M491.0 497.1L491.0 497.4M485.8 498.1L486.0 499.3M477.0 499.3L477.2 501.9M459.5 500.5L459.6 505.9M464.9 500.3L465.3 508.8M615.2 261.8L618.4 260.4M611.5 253.7L614.6 252.2M607.9 411.9L609.6 412.8M612.3 403.3L617.1 405.6M619.7 274.7L624.3 273.2M616.0 265.0L622.1 262.5M608.3 247.7L610.1 246.7M599.9 233.9L606.5 229.5M614.2 259.5L614.9 259.2M606.0 243.6L607.4 242.9M611.3 253.5L613.7 252.3M622.7 282.9L624.0 282.5M625.5 293.9L627.1 293.6M617.5 267.3L622.2 265.4M624.3 288.7L628.9 287.5M622.1 280.8L628.4 279.0M557.4 190.4L558.5 188.8M574.8 204.6L577.0 202.3M567.8 198.4L568.8 197.3M575.3 205.0L577.2 203.0M570.5 200.7L571.9 199.1M586.4 216.5L592.4 211.2M579.3 208.9L580.4 207.8M524.1 171.8L524.7 170.3M550.0 185.4L553.3 180.2M544.0 181.7L545.2 179.7M535.3 177.0L536.4 174.9M511.1 222.3L513.5 217.4M505.8 232.9L507.0 230.6M497.1 209.0L497.8 207.0M478.9 211.7L479.7 207.0M478.9 256.2L479.8 253.2M487.0 253.4L487.3 252.6M461.0 230.7L461.1 229.5M459.6 245.1L459.7 243.4M476.4 225.3L476.8 223.5M490.1 234.6L491.0 232.1M542.1 412.1L543.7 413.6M548.7 419.8L553.2 424.4M548.6 449.1L550.8 451.9M551.9 440.4L554.2 443.1M529.9 459.2L533.2 465.1M520.3 453.9L521.1 455.5M541.8 434.7L542.7 435.8M527.8 440.8L528.8 442.4M583.6 394.1L588.9 396.8M571.5 401.5L575.6 404.0M566.9 377.4L568.2 377.9M563.0 389.3L564.0 390.0M590.3 400.4L594.2 402.6M587.7 410.3L591.6 412.7M594.0 415.6L597.6 417.9M603.1 405.5L604.5 406.2M624.1 370.8L626.4 371.4M613.2 398.4L615.7 399.5M613.2 401.4L621.4 405.1M618.6 388.4L620.3 389.0M593.3 281.4L594.7 280.8M565.4 345.7L572.5 346.7M562.4 335.5L567.8 335.8M588.9 373.2L592.4 374.4M582.3 367.2L590.3 369.7M582.1 349.0L583.5 349.3M588.6 338.4L590.5 338.5M627.2 306.5L636.2 305.3M620.3 303.6L623.3 303.1M622.1 286.8L625.0 286.0M619.5 286.6L621.6 286.0M374.1 179.5L373.3 178.0M364.4 185.2L359.2 177.1M382.7 175.1L380.8 171.1M370.3 181.6L369.0 179.4M358.4 189.3L355.6 185.3M545.1 182.4L545.9 181.0M519.9 170.1L521.8 165.4M538.8 178.8L539.9 176.7M530.3 174.6L530.9 173.3M518.4 432.7L519.4 434.5M500.0 412.9L501.0 414.8M517.8 410.2L520.2 413.3M525.2 417.6L526.9 419.8M490.0 427.0L490.9 429.8M499.0 438.1L499.6 439.7M622.1 334.7L630.7 335.0M628.5 337.1L632.9 337.3M624.4 319.5L631.1 319.1M627.5 319.8L634.8 319.4M623.6 369.5L625.3 369.9M618.2 383.0L627.4 386.0M625.8 352.2L631.2 353.0M623.0 350.6L624.8 350.8M597.2 367.2L599.5 367.9M576.7 284.6L580.8 283.1M582.9 289.3L588.6 287.5M562.8 290.8L564.0 290.3M561.3 299.2L564.0 298.4M572.5 317.2L576.6 316.7M587.6 308.1L594.8 306.9M582.6 317.9L584.2 317.8M616.1 334.0L621.9 334.2M612.3 347.7L618.7 348.5M599.0 339.1L601.0 339.2M602.1 348.3L603.6 348.5M608.7 290.9L614.1 289.5M601.9 292.6L604.8 291.9M615.0 303.9L624.0 302.4M613.0 321.3L619.0 321.0M600.2 310.5L608.8 309.4M604.1 320.5L606.6 320.3M590.3 221.1L592.0 219.7M607.1 393.2L614.3 396.2M615.5 379.8L620.9 381.5M602.2 387.1L604.4 388.0M604.3 376.3L609.0 377.8M617.5 365.2L624.9 366.8M613.0 362.4L621.6 364.2M544.0 181.5L578.7 124.3M565.3 196.0L591.4 166.3M602.0 236.0L667.5 195.0M627.6 309.5L729.0 298.6M625.0 296.0L645.7 289.0M628.0 320.0L648.6 318.6M625.4 364.4L665.6 376.2M627.6 349.6L657.0 353.0M600.0 425.7L624.2 442.6M557.8 468.0L576.0 493.3M540.9 474.3L569.6 522.0M521.0 487.0L559.0 580.0M507.0 487.0L538.8 583.0M466.0 499.7L467.8 550.4M501.6 491.0L509.2 516.6M285.0 334.0L190.0 337.3M295.8 375.0L250.5 387.7M306.0 381.0L271.2 394.0M319.0 430.8L288.0 452.0M344.4 461.7L316.0 496.8M361.3 470.0L343.0 496.8M382.5 485.0L373.0 504.0M446.8 499.8L443.8 573.8M443.0 158.0L442.6 127.0M383.7 173.3L371.7 147.2M367.8 182.3L358.3 163.5M373.0 182.0L364.0 166.5M403.0 172.0L393.9 155.1M398.0 175.0L390.5 159.0M319.0 227.6L298.0 211.3M315.7 233.3L287.4 222.0M335.0 225.0L316.2 208.0M340.0 220.0L320.0 203.8M305.0 255.0L290.3 248.0M302.0 265.0L283.5 257.0M290.0 300.0L264.3 315.7M592.0 388.5L691.0 424.4M401.7 283.0L359.8 248.3M472.6 248.3L477.7 226.5M564.3 265.5L596.4 247.0M551.4 252.7L563.0 244.5M513.7 291.2L528.3 283.0M460.3 285.6L462.3 276.6M452.6 256.0L452.6 247.0M432.5 397.3L415.8 450.7M365.8 358.2L347.0 364.7M364.5 389.6L354.2 397.3M391.4 413.5L379.9 428.9M368.3 408.3L346.5 435.3M347.8 413.5L323.4 431.4M328.5 391.6L310.5 399.8M364.5 443.0L355.5 458.4M430.0 427.6L428.7 437.9M528.3 377.5L572.8 405.8M573.3 383.9L587.4 391.6M577.1 395.5L590.0 403.2M593.8 360.8L625.4 364.4M516.3 425.0L529.1 445.6M556.6 354.4L565.6 357.0M496.2 398.0L500.0 404.5M483.4 464.8L486.0 473.8M465.4 466.1L466.0 475.0M309.3 329.2L326.0 329.7M599.0 417.3L609.2 426.3" stroke="#ff2020" stroke-opacity="0.68" stroke-width="0.9" fill="none"/>
<path d="M614.5 395.3L660 412.6" stroke="#ff1a1a" stroke-opacity="0.8" stroke-width="1.5" fill="none"/>
</svg>
<div class="r" style="left:11.00px;top:33.00px;width:187.50px;height:520.50px;background:#f0f0f0;box-shadow:inset 0 0 0 1px #bcbcbc"></div>
<div class="r" style="left:12.00px;top:34.00px;width:185.50px;height:11.00px;background:#d3d3d3;"></div>
<svg class="r" style="left:185px;top:540.5px" width="13" height="13" viewBox="0 0 13 13"><path d="M0.5 12.5 L12.5 0.5 L12.5 12.5Z" fill="#f7f7f7"/></svg>
<svg class="r" style="left:15px;top:36px" width="7" height="7" viewBox="0 0 7 7"><path d="M0.4 0.8 H6.1 L3.25 6.4Z" fill="#111"/></svg>
<div class="t" style="left:25.00px;top:35.88px;font-size:9.0px;color:#333;">Tools</div>
<div class="t" style="left:15.80px;top:50.99px;font-size:8.4px;color:#2e2e2e;">Cells</div>
<div class="t" style="left:15.90px;top:61.34px;font-size:8.7px;color:#2e2e2e;transform-origin:0 0;transform:scaleX(0.895);">num cells:</div>
<div class="t" style="left:55.80px;top:61.34px;font-size:8.7px;color:#2e2e2e;transform-origin:0 0;transform:scaleX(0.895);">599</div>
<div class="t" style="left:15.90px;top:71.44px;font-size:8.7px;color:#2e2e2e;transform-origin:0 0;transform:scaleX(0.895);">cell size</div>
<div class="t" style="left:15.90px;top:81.24px;font-size:8.7px;color:#2e2e2e;transform-origin:0 0;transform:scaleX(0.895);">min</div>
<div class="r" style="left:31.60px;top:81.30px;width:59.40px;height:10.70px;background:#fdfdfd;border-radius:2px"></div>
<div class="t" style="left:34.00px;top:82.74px;font-size:8.7px;color:#2e2e2e;transform-origin:0 0;transform:scaleX(0.895);">80.000</div>
<div class="r" style="left:104.30px;top:82.00px;width:1.00px;height:11.00px;background:#8c8c8c;"></div>
<div class="t" style="left:107.90px;top:81.24px;font-size:8.7px;color:#2e2e2e;transform-origin:0 0;transform:scaleX(0.895);">max</div>
<div class="r" style="left:126.00px;top:81.30px;width:58.80px;height:10.70px;background:#fdfdfd;border-radius:2px"></div>
<div class="t" style="left:128.40px;top:82.74px;font-size:8.7px;color:#2e2e2e;transform-origin:0 0;transform:scaleX(0.895);">80.000</div>
<div class="t" style="left:15.90px;top:93.84px;font-size:8.7px;color:#2e2e2e;transform-origin:0 0;transform:scaleX(0.895);">cell stretch</div>
<div class="t" style="left:15.90px;top:103.64px;font-size:8.7px;color:#2e2e2e;transform-origin:0 0;transform:scaleX(0.895);">min</div>
<div class="r" style="left:31.60px;top:103.60px;width:59.40px;height:10.60px;background:#fdfdfd;border-radius:2px"></div>
<div class="t" style="left:34.00px;top:105.24px;font-size:8.7px;color:#2e2e2e;transform-origin:0 0;transform:scaleX(0.895);">1.000</div>
<div class="r" style="left:104.30px;top:104.00px;width:1.00px;height:11.00px;background:#8c8c8c;"></div>
<div class="t" style="left:107.90px;top:103.64px;font-size:8.7px;color:#2e2e2e;transform-origin:0 0;transform:scaleX(0.895);">max</div>
<div class="r" style="left:126.00px;top:103.60px;width:58.80px;height:10.60px;background:#fdfdfd;border-radius:2px"></div>
<div class="t" style="left:128.40px;top:105.24px;font-size:8.7px;color:#2e2e2e;transform-origin:0 0;transform:scaleX(0.895);">1.000</div>
<div class="r" style="left:15.60px;top:115.80px;width:39.30px;height:10.80px;background:#a9cdf4;border-radius:2px"></div>
<div class="t" style="left:17.80px;top:117.04px;font-size:8.7px;color:#1f2833;transform-origin:0 0;transform:scaleX(0.895);">reset cells</div>
<div class="r" style="left:13.00px;top:127.60px;width:183.00px;height:1.50px;background:#bdbdbd;"></div>
<div class="t" style="left:15.90px;top:129.79px;font-size:8.4px;color:#2e2e2e;">Directions</div>
<div class="r" style="left:15.90px;top:140.30px;width:110.10px;height:10.60px;background:#fdfdfd;border-radius:2px"></div>
<div class="t" style="left:18.30px;top:141.54px;font-size:8.7px;color:#2e2e2e;transform-origin:0 0;transform:scaleX(0.895);">smooth</div>
<div class="r" style="left:126.00px;top:140.30px;width:11.00px;height:10.60px;background:#a9cdf4;border-radius:0 2px 2px 0"></div>
<svg class="r" style="left:129px;top:142.5px" width="6" height="6" viewBox="0 0 6 6"><path d="M0.1 0.2 H5.5 L2.8 5.5Z" fill="#111"/></svg>
<div class="t" style="left:138.50px;top:141.54px;font-size:8.7px;color:#2e2e2e;transform-origin:0 0;transform:scaleX(0.895);">direction field</div>
<div class="r" style="left:15.90px;top:152.60px;width:40.60px;height:10.20px;background:#a9cdf4;border-radius:2px"></div>
<div class="t" style="left:18.10px;top:153.84px;font-size:8.7px;color:#1f2833;transform-origin:0 0;transform:scaleX(0.895);">rotate field</div>
<div class="r" style="left:59.50px;top:152.60px;width:56.30px;height:10.20px;background:#fdfdfd;border-radius:2px"></div>
<div class="t" style="left:61.90px;top:153.84px;font-size:8.7px;color:#2e2e2e;transform-origin:0 0;transform:scaleX(0.895);">0.000</div>
<div class="t" style="left:117.00px;top:153.84px;font-size:8.7px;color:#2e2e2e;transform-origin:0 0;transform:scaleX(0.895);">angle</div>
<div class="r" style="left:13.00px;top:164.20px;width:183.00px;height:1.50px;background:#bdbdbd;"></div>
<div class="t" style="left:15.90px;top:166.99px;font-size:8.4px;color:#2e2e2e;">View</div>
<div class="r" style="left:15.90px;top:177.00px;width:10.50px;height:10.50px;background:#fdfdfd;border-radius:2px"></div>
<div class="t" style="left:28.00px;top:178.14px;font-size:8.7px;color:#2e2e2e;transform-origin:0 0;transform:scaleX(0.895);">draw directions</div>
<div class="r" style="left:15.90px;top:189.20px;width:10.50px;height:10.50px;background:#fdfdfd;border-radius:2px"></div>
<svg class="r" style="left:15.90px;top:189.20px" width="11" height="11" viewBox="0 0 11 11"><path d="M1.7 5.9 L3.8 7.8 L8.6 3.4" stroke="#3d8ef0" stroke-width="1.35" fill="none" stroke-linecap="round" stroke-linejoin="round"/></svg>
<div class="t" style="left:28.00px;top:190.34px;font-size:8.7px;color:#2e2e2e;transform-origin:0 0;transform:scaleX(0.895);">draw point</div>
<div class="r" style="left:15.90px;top:201.60px;width:10.50px;height:10.50px;background:#fdfdfd;border-radius:2px"></div>
<svg class="r" style="left:15.90px;top:201.60px" width="11" height="11" viewBox="0 0 11 11"><path d="M1.7 5.9 L3.8 7.8 L8.6 3.4" stroke="#3d8ef0" stroke-width="1.35" fill="none" stroke-linecap="round" stroke-linejoin="round"/></svg>
<div class="t" style="left:28.00px;top:202.64px;font-size:8.7px;color:#2e2e2e;transform-origin:0 0;transform:scaleX(0.895);">draw srf</div>
<div class="r" style="left:104.30px;top:177.50px;width:1.00px;height:35.50px;background:#8c8c8c;"></div>
<div class="r" style="left:108.00px;top:177.00px;width:10.50px;height:10.50px;background:#fdfdfd;border-radius:2px"></div>
<div class="t" style="left:120.00px;top:178.14px;font-size:8.7px;color:#2e2e2e;transform-origin:0 0;transform:scaleX(0.895);">draw attribute</div>
<div class="r" style="left:108.00px;top:189.20px;width:10.50px;height:10.50px;background:#fdfdfd;border-radius:2px"></div>
<div class="t" style="left:120.00px;top:190.34px;font-size:8.7px;color:#2e2e2e;transform-origin:0 0;transform:scaleX(0.895);">draw thickened</div>
<div class="r" style="left:15.90px;top:213.80px;width:55.10px;height:10.30px;background:#fdfdfd;border-radius:2px"></div>
<div class="t" style="left:18.30px;top:215.04px;font-size:8.7px;color:#2e2e2e;transform-origin:0 0;transform:scaleX(0.895);">2.000</div>
<div class="t" style="left:72.20px;top:215.04px;font-size:8.7px;color:#2e2e2e;transform-origin:0 0;transform:scaleX(0.895);">pattern thickness</div>
<div class="r" style="left:15.90px;top:226.00px;width:36.00px;height:10.20px;background:#a9cdf4;border-radius:2px"></div>
<div class="t" style="left:18.10px;top:227.24px;font-size:8.7px;color:#1f2833;transform-origin:0 0;transform:scaleX(0.895);">trim edge</div>
<div class="r" style="left:13.00px;top:237.20px;width:183.00px;height:1.50px;background:#bdbdbd;"></div>
<div class="t" style="left:15.90px;top:240.09px;font-size:8.4px;color:#2e2e2e;">Drawing</div>
<div class="t" style="left:15.90px;top:250.24px;font-size:8.7px;color:#2e2e2e;transform-origin:0 0;transform:scaleX(0.895);">Edit mode</div>
<div class="r" style="left:15.90px;top:259.80px;width:110.10px;height:11.00px;background:#fdfdfd;border-radius:2px"></div>
<div class="t" style="left:18.30px;top:261.24px;font-size:8.7px;color:#2e2e2e;transform-origin:0 0;transform:scaleX(0.895);">cell size</div>
<div class="r" style="left:126.00px;top:259.80px;width:11.00px;height:11.00px;background:#a9cdf4;border-radius:0 2px 2px 0"></div>
<svg class="r" style="left:129px;top:262.3px" width="6" height="6" viewBox="0 0 6 6"><path d="M0.1 0.2 H5.5 L2.8 5.5Z" fill="#111"/></svg>
<div class="t" style="left:138.50px;top:261.24px;font-size:8.7px;color:#2e2e2e;transform-origin:0 0;transform:scaleX(0.895);">edit mode</div>
<div class="t" style="left:15.90px;top:272.54px;font-size:8.7px;color:#2e2e2e;transform-origin:0 0;transform:scaleX(0.895);">Brush</div>
<div class="r" style="left:15.90px;top:282.40px;width:58.80px;height:10.60px;background:#fdfdfd;border-radius:2px"></div>
<div class="t" style="left:18.30px;top:283.74px;font-size:8.7px;color:#2e2e2e;transform-origin:0 0;transform:scaleX(0.895);">10.000</div>
<div class="t" style="left:76.00px;top:283.74px;font-size:8.7px;color:#2e2e2e;transform-origin:0 0;transform:scaleX(0.895);">radius</div>
<div class="r" style="left:15.90px;top:294.80px;width:58.80px;height:10.40px;background:#fdfdfd;border-radius:2px"></div>
<div class="t" style="left:18.30px;top:295.94px;font-size:8.7px;color:#2e2e2e;transform-origin:0 0;transform:scaleX(0.895);">1.000</div>
<div class="t" style="left:76.00px;top:295.94px;font-size:8.7px;color:#2e2e2e;transform-origin:0 0;transform:scaleX(0.895);">flow</div>
<div class="r" style="left:104.30px;top:283.00px;width:1.00px;height:23.50px;background:#8c8c8c;"></div>
<div class="r" style="left:108.00px;top:282.40px;width:59.30px;height:10.60px;background:#fdfdfd;border-radius:2px"></div>
<div class="t" style="left:110.40px;top:283.74px;font-size:8.7px;color:#2e2e2e;transform-origin:0 0;transform:scaleX(0.895);">0.000</div>
<div class="t" style="left:168.50px;top:283.74px;font-size:8.7px;color:#2e2e2e;transform-origin:0 0;transform:scaleX(0.895);width:29.8px;overflow:hidden">hardnes</div>
<div class="r" style="left:108.00px;top:294.80px;width:59.30px;height:10.40px;background:#fdfdfd;border-radius:2px"></div>
<div class="t" style="left:110.40px;top:295.94px;font-size:8.7px;color:#2e2e2e;transform-origin:0 0;transform:scaleX(0.895);">1.000</div>
<div class="t" style="left:168.50px;top:295.94px;font-size:8.7px;color:#2e2e2e;transform-origin:0 0;transform:scaleX(0.895);">value</div>
<div class="r" style="left:15.90px;top:307.00px;width:43.00px;height:10.70px;background:#a9cdf4;border-radius:2px"></div>
<div class="t" style="left:18.10px;top:308.24px;font-size:8.7px;color:#1f2833;transform-origin:0 0;transform:scaleX(0.895);">clear points</div>
<div class="r" style="left:15.90px;top:319.20px;width:38.80px;height:10.30px;background:#a9cdf4;border-radius:2px"></div>
<div class="t" style="left:18.10px;top:320.44px;font-size:8.7px;color:#1f2833;transform-origin:0 0;transform:scaleX(0.895);">cell points</div>
<div class="r" style="left:15.90px;top:331.40px;width:58.10px;height:10.30px;background:#a9cdf4;border-radius:2px"></div>
<div class="t" style="left:18.10px;top:332.64px;font-size:8.7px;color:#1f2833;transform-origin:0 0;transform:scaleX(0.895);">boundary points</div>
<div class="r" style="left:15.90px;top:343.50px;width:73.90px;height:10.50px;background:#a9cdf4;border-radius:2px"></div>
<div class="t" style="left:18.10px;top:344.74px;font-size:8.7px;color:#1f2833;transform-origin:0 0;transform:scaleX(0.895);">distance from points</div>
<div class="r" style="left:15.30px;top:355.40px;width:121.70px;height:73.20px;background:#fdfdfd;border-radius:2px"></div>
<div class="t" style="left:138.40px;top:357.34px;font-size:8.7px;color:#2e2e2e;transform-origin:0 0;transform:scaleX(0.895);">expression</div>
<div class="r" style="left:15.90px;top:430.10px;width:90.30px;height:10.70px;background:#a9cdf4;border-radius:2px"></div>
<div class="t" style="left:18.10px;top:431.34px;font-size:8.7px;color:#1f2833;transform-origin:0 0;transform:scaleX(0.895);">compute from expression</div>
<div class="r" style="left:15.90px;top:442.20px;width:10.50px;height:10.50px;background:#fdfdfd;border-radius:2px"></div>
<svg class="r" style="left:15.90px;top:442.20px" width="11" height="11" viewBox="0 0 11 11"><path d="M1.7 5.9 L3.8 7.8 L8.6 3.4" stroke="#3d8ef0" stroke-width="1.35" fill="none" stroke-linecap="round" stroke-linejoin="round"/></svg>
<div class="t" style="left:28.00px;top:443.34px;font-size:8.7px;color:#2e2e2e;transform-origin:0 0;transform:scaleX(0.895);">pause</div>
<div class="r" style="left:15.90px;top:454.60px;width:121.10px;height:10.60px;background:#fdfdfd;border-radius:2px"></div>
<div class="t" style="left:18.30px;top:455.84px;font-size:8.7px;color:#2e2e2e;transform-origin:0 0;transform:scaleX(0.895);">1.000</div>
<div class="t" style="left:138.40px;top:455.84px;font-size:8.7px;color:#2e2e2e;transform-origin:0 0;transform:scaleX(0.895);">min spike</div>
<div class="r" style="left:15.90px;top:466.80px;width:121.10px;height:10.60px;background:#fdfdfd;border-radius:2px"></div>
<div class="t" style="left:18.30px;top:468.04px;font-size:8.7px;color:#2e2e2e;transform-origin:0 0;transform:scaleX(0.895);">30.000</div>
<div class="t" style="left:138.40px;top:468.04px;font-size:8.7px;color:#2e2e2e;transform-origin:0 0;transform:scaleX(0.895);">max spike</div>
<div class="r" style="left:15.90px;top:479.00px;width:121.10px;height:10.80px;background:#fdfdfd;border-radius:2px"></div>
<div class="t" style="left:18.30px;top:480.24px;font-size:8.7px;color:#2e2e2e;transform-origin:0 0;transform:scaleX(0.895);">2.300</div>
<div class="t" style="left:138.40px;top:480.24px;font-size:8.7px;color:#2e2e2e;transform-origin:0 0;transform:scaleX(0.895);">spike power</div>
<div class="r" style="left:15.90px;top:491.20px;width:121.10px;height:10.80px;background:#fdfdfd;border-radius:2px"></div>
<div class="t" style="left:18.30px;top:492.44px;font-size:8.7px;color:#2e2e2e;transform-origin:0 0;transform:scaleX(0.895);">60.000</div>
<div class="t" style="left:138.40px;top:492.44px;font-size:8.7px;color:#2e2e2e;transform-origin:0 0;transform:scaleX(0.895);">inner radius</div>
<div class="r" style="left:15.60px;top:503.40px;width:40.40px;height:10.60px;background:#a9cdf4;border-radius:2px"></div>
<div class="t" style="left:17.80px;top:504.64px;font-size:8.7px;color:#1f2833;transform-origin:0 0;transform:scaleX(0.895);">radiolarian</div>
</div>
</body></html>
